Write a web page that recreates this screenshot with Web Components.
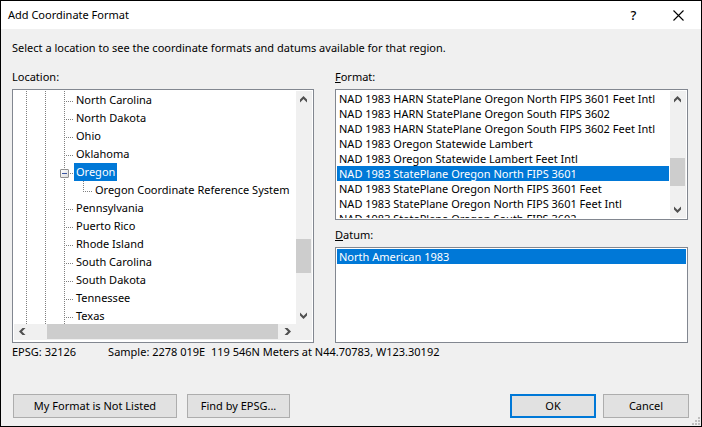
<!DOCTYPE html>
<html lang="en">
<head>
<meta charset="utf-8">
<title>Add Coordinate Format</title>
<style>
  body {
    margin: 0;
    font: 11px/18px "Noto Sans", "Open Sans", sans-serif;
    color: #000;
    background: #f0f0f0;
  }
</style>
</head>
<body>
<coordinate-dialog></coordinate-dialog>

<script>
(function () {
  function makeTemplate(html) {
    const template = document.createElement("template");
    template.innerHTML = html;
    return template;
  }

  class BaseElement extends HTMLElement {
    constructor() {
      super();
      this.attachShadow({ mode: "open" });
      this.shadowRoot.appendChild(this.constructor.template.content.cloneNode(true));
    }
  }

  class TitleBar extends BaseElement {
    static template = makeTemplate(`
      <style>
        :host {
          display: flex;
          flex: none;
          align-items: center;
          height: 28px;
          padding-left: 7px;
          background: #fff;
        }
        h1 {
          flex: 1;
          margin: 0;
          font: inherit;
        }
        button {
          display: grid;
          place-items: center;
          width: 45px;
          height: 26px;
          padding: 0;
          border: 0;
          background: none;
          color: #000;
          font: inherit;
          font-size: 13px;
          font-weight: 500;
        }
      </style>
      <h1><slot></slot></h1>
      <button type="button" aria-label="Help">?</button>
      <button type="button" aria-label="Close">
        <svg width="11" height="11" viewBox="0 0 11 11" stroke="#000" stroke-width="1.1">
          <path d="M.5.5l10 10M10.5.5l-10 10"/>
        </svg>
      </button>
    `);
  }

  class ScrollStrip extends BaseElement {
    static template = makeTemplate(`
      <style>
        :host {
          display: flex;
          flex-direction: column;
          width: 16px;
          background: #f0f0f0;
        }
        :host([horizontal]) {
          flex-direction: row;
          width: auto;
          height: 16px;
        }
        button {
          display: grid;
          place-items: center;
          flex: none;
          width: 15px;
          height: 17px;
          padding: 0;
          border: 0;
          background: none;
        }
        .track {
          display: flex;
          flex-direction: inherit;
          flex: 1;
        }
        .thumb {
          width: 15px;
          background: #cdcdcd;
        }
        :host([horizontal]) button {
          width: 17px;
          height: 15px;
        }
        :host([horizontal]) .thumb {
          width: auto;
          height: 15px;
        }
        :host([horizontal]) svg {
          transform: rotate(-90deg);
        }
      </style>
      <button type="button" aria-label="Scroll back">
        <svg width="7" height="7" viewBox="0 0 7 7"><path d="M0 3.500L3.500 0 7 3.500V6.500L3.500 3 0 6.500z" fill="#505050"/></svg>
      </button>
      <div class="track"><span class="before"></span><span class="thumb"></span><span class="after"></span></div>
      <button type="button" aria-label="Scroll forward">
        <svg width="7" height="7" viewBox="0 0 7 7"><path d="M0 3.500L3.500 7 7 3.500V.5L3.500 4 0 .5z" fill="#505050"/></svg>
      </button>
    `);

    connectedCallback() {
      for (const part of ["before", "thumb", "after"]) {
        this.shadowRoot.querySelector("." + part).style.flex = this.getAttribute(part) + " 0 0";
      }
    }
  }

  class ListField extends BaseElement {
    static template = makeTemplate(`
      <style>
        :host {
          display: flex;
          flex-direction: column;
          min-width: 0;
          min-height: 0;
        }
        label {
          margin-bottom: 3px;
        }
        .box {
          display: flex;
          flex: 1 1 0;
          min-height: 0;
          border: 1px solid #828790;
          padding: 1px;
          background: #fff;
        }
        select {
          flex: 1;
          min-width: 0;
          height: 100%;
          margin: 0;
          padding: 0;
          border: 0;
          border-radius: 0;
          outline: 0;
          overflow: hidden;
          background: #fff;
          color: #000;
          font: inherit;
        }
        option {
          height: 15px;
          min-height: 15px;
          padding: 0 2px;
        }
        option:checked {
          background: #0078d7 linear-gradient(#0078d7, #0078d7);
          color: #fff;
          -webkit-text-fill-color: #fff;
        }
        ::slotted(scroll-strip) {
          margin-left: 1px;
        }
      </style>
      <label for="list"><slot name="label"></slot></label>
      <div class="box">
        <select id="list" size="8"></select>
        <slot name="scroll"></slot>
      </div>
    `);

    connectedCallback() {
      this.shadowRoot.querySelector("select").append(...this.querySelectorAll("option"));
    }
  }

  class TreeRow extends BaseElement {
    static template = makeTemplate(`
      <style>
        :host {
          --dots: #808080 0 1px, transparent 1px 2px;
          display: flex;
          height: 18px;
          white-space: nowrap;
        }
        .guide,
        .branch {
          flex: none;
          width: 19px;
          background: repeating-linear-gradient(var(--dots)) left / 1px 100% no-repeat;
        }
        .branch {
          position: relative;
          width: 10px;
          background:
            repeating-linear-gradient(var(--dots)) left / 1px 100% no-repeat,
            repeating-linear-gradient(90deg, var(--dots)) 0 10px / 9px 1px no-repeat;
        }
        :host([last]) .branch {
          background-size: 1px 10px, 9px 1px;
          background-position: 0 0, 0 10px;
        }
        button {
          position: absolute;
          top: 6px;
          left: -4px;
          display: grid;
          place-items: center;
          width: 9px;
          height: 9px;
          padding: 0;
          border: 1px solid #919191;
          border-radius: 1px;
          background: linear-gradient(135deg, #fff, #ddd);
        }
        button::before {
          content: "";
          width: 5px;
          height: 1px;
          background: #3b55a0;
        }
        .name {
          padding: 0 2px;
        }
        :host([aria-selected="true"]) .name {
          background: #0078d7;
          color: #fff;
        }
      </style>
      <span class="branch"></span>
      <span class="name"><slot></slot></span>
    `);

    connectedCallback() {
      this.setAttribute("role", "treeitem");
      const branch = this.shadowRoot.querySelector(".branch");

      for (let i = 1; i < Number(this.getAttribute("aria-level")); i++) {
        const guide = document.createElement("span");
        guide.className = "guide";
        branch.before(guide);
      }

      if (this.getAttribute("aria-expanded") === "true") {
        const toggle = document.createElement("button");
        toggle.type = "button";
        toggle.setAttribute("aria-label", "Collapse");
        branch.append(toggle);
      }
    }
  }

  class LocationTree extends BaseElement {
    static template = makeTemplate(`
      <style>
        :host {
          display: flex;
          flex-direction: column;
          min-width: 0;
          min-height: 0;
        }
        .label {
          margin-bottom: 3px;
        }
        .box {
          display: grid;
          grid-template: minmax(0, 1fr) 17px / minmax(0, 1fr) 16px;
          flex: 1 1 0;
          min-height: 0;
          border: 1px solid #828790;
          padding: 1px;
          background: #fff;
        }
        .rows {
          overflow: hidden;
          padding-left: 12px;
        }
        .corner {
          height: 16px;
          background: #f0f0f0;
        }
      </style>
      <div class="label" id="label">Location:</div>
      <div class="box">
        <div class="rows" role="tree" aria-labelledby="label"></div>
        <scroll-strip before="130" thumb="34" after="34"></scroll-strip>
        <scroll-strip horizontal before="16" thumb="231" after="1"></scroll-strip>
        <div class="corner"></div>
      </div>
    `);

    connectedCallback() {
      const names = [
        "North Carolina", "North Dakota", "Ohio", "Oklahoma", "Oregon",
        "Oregon Coordinate Reference System", "Pennsylvania", "Puerto Rico",
        "Rhode Island", "South Carolina", "South Dakota", "Tennessee", "Texas",
      ];
      const rows = this.shadowRoot.querySelector(".rows");

      for (const name of names) {
        const row = document.createElement("tree-row");
        const isChild = name.startsWith("Oregon ");
        row.textContent = name;
        row.setAttribute("aria-level", isChild ? 4 : 3);
        row.toggleAttribute("last", isChild);
        if (name === "Oregon") {
          row.setAttribute("aria-expanded", "true");
          row.setAttribute("aria-selected", "true");
        }
        rows.append(row);
      }
    }
  }

  class PushButton extends BaseElement {
    static template = makeTemplate(`
      <style>
        :host {
          display: block;
          min-width: 86px;
        }
        button {
          width: 100%;
          height: 24px;
          padding: 0 11px;
          border: 1px solid #adadad;
          background: #e1e1e1;
          color: #000;
          font: inherit;
          white-space: nowrap;
        }
        :host([default]) button {
          border: 2px solid #0078d7;
        }
      </style>
      <button type="button"><slot></slot></button>
    `);
  }

  class CoordinateDialog extends BaseElement {
    static template = makeTemplate(`
      <style>
        :host {
          position: relative;
          box-sizing: border-box;
          display: flex;
          flex-direction: column;
          height: 100vh;
          min-height: 360px;
          border: 1px solid #000;
        }
        main {
          display: flex;
          flex-direction: column;
          flex: 1;
          min-height: 0;
          padding: 10px 13px 8px 11px;
        }
        p {
          margin: 0;
        }
        .panels {
          display: grid;
          grid-template: minmax(0, 1fr) / minmax(0, 302fr) minmax(0, 353fr);
          gap: 21px;
          flex: 1 1 0;
          min-height: 0;
          margin-top: 11px;
        }
        .lists {
          display: grid;
          grid-template-rows: minmax(0, 152fr) minmax(0, 117fr);
          gap: 6px;
          min-height: 0;
        }
        .status {
          display: flex;
          gap: 32px;
          white-space: pre;
        }
        footer {
          display: flex;
          gap: 7px;
          margin: 33px -1px 0 1px;
        }
        .wide {
          margin-right: 3px;
          min-width: 164px;
        }
        .find {
          min-width: 103px;
        }
        .ok {
          margin-left: auto;
        }
        .grip {
          position: absolute;
          right: 1px;
          bottom: 1px;
        }
      </style>
      <title-bar>Add Coordinate Format</title-bar>
      <main>
        <p>Select a location to see the coordinate formats and datums available for that region.</p>
        <div class="panels">
          <location-tree></location-tree>
          <div class="lists">
            <list-field>
              <span slot="label"><u>F</u>ormat:</span>
              <option>NAD 1983 HARN StatePlane Oregon North FIPS 3601 Feet Intl</option>
              <option>NAD 1983 HARN StatePlane Oregon South FIPS 3602</option>
              <option>NAD 1983 HARN StatePlane Oregon South FIPS 3602 Feet Intl</option>
              <option>NAD 1983 Oregon Statewide Lambert</option>
              <option>NAD 1983 Oregon Statewide Lambert Feet Intl</option>
              <option selected>NAD 1983 StatePlane Oregon North FIPS 3601</option>
              <option>NAD 1983 StatePlane Oregon North FIPS 3601 Feet</option>
              <option>NAD 1983 StatePlane Oregon North FIPS 3601 Feet Intl</option>
              <option>NAD 1983 StatePlane Oregon South FIPS 3602</option>
              <scroll-strip slot="scroll" before="51" thumb="28" after="15"></scroll-strip>
            </list-field>
            <list-field>
              <span slot="label"><u>D</u>atum:</span>
              <option selected>North American 1983</option>
            </list-field>
          </div>
        </div>
        <div class="status"><span>EPSG: 32126</span><span>Sample: 2278 019E  119 546N Meters at N44.70783, W123.30192</span></div>
        <footer>
          <push-button class="wide">My Format is Not Listed</push-button>
          <push-button class="find">Find by EPSG...</push-button>
          <push-button class="ok" default>OK</push-button>
          <push-button>Cancel</push-button>
        </footer>
      </main>
      <svg class="grip" width="8" height="8" viewBox="0 0 8 8" fill="#bfbfbf" aria-hidden="true">
        <path d="M6 0h2v2H6zM3 3h2v2H3zM6 3h2v2H6zM0 6h2v2H0zM3 6h2v2H3zM6 6h2v2H6z"/>
      </svg>
    `);
  }

  customElements.define("title-bar", TitleBar);
  customElements.define("scroll-strip", ScrollStrip);
  customElements.define("list-field", ListField);
  customElements.define("tree-row", TreeRow);
  customElements.define("location-tree", LocationTree);
  customElements.define("push-button", PushButton);
  customElements.define("coordinate-dialog", CoordinateDialog);
})();
</script>
</body>
</html>
